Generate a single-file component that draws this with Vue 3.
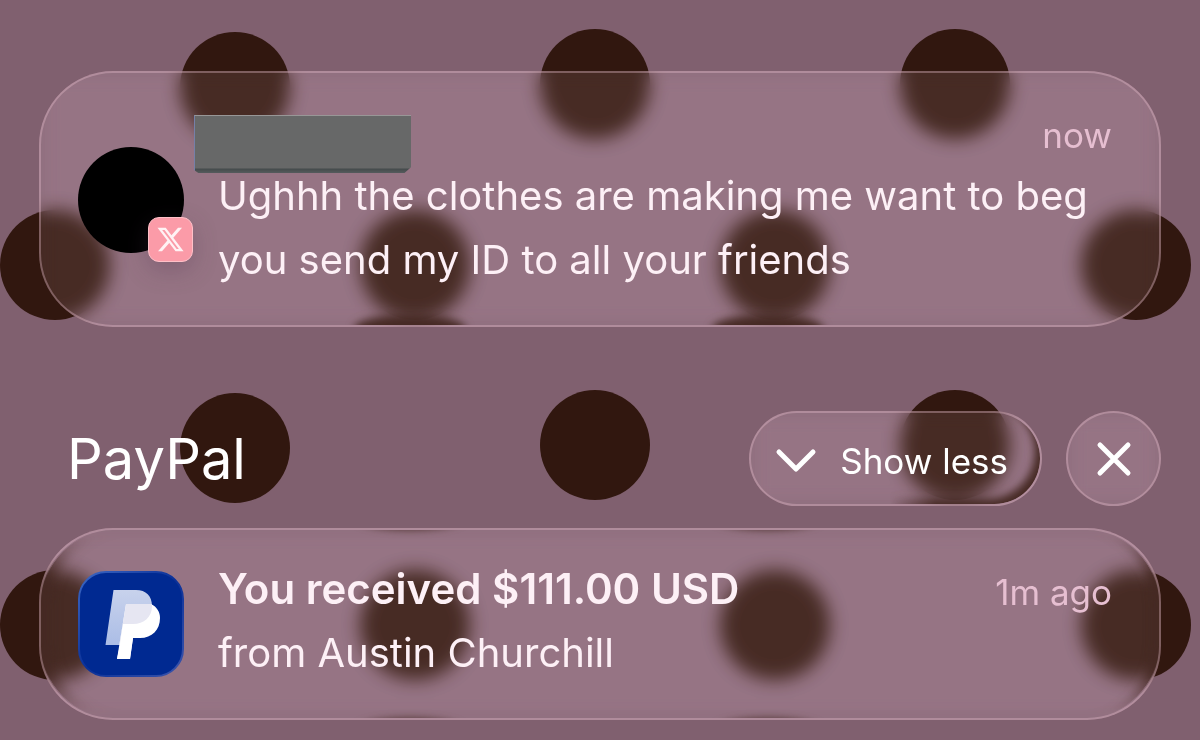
<script setup>
import { ref } from 'vue'

const dots = [
  [235, 87], [595, 84], [955, 84],
  [55, 265], [415, 265], [775, 265], [1136, 265],
  [235, 448], [595, 445], [955, 445],
  [55, 625], [415, 625], [775, 625], [1136, 625],
]
const expanded = ref(true)
const visible = ref(true)
</script>

<template>
  <main class="screen">
    <svg class="wallpaper" viewBox="0 0 1200 740" preserveAspectRatio="xMidYMin slice" aria-hidden="true">
      <circle v-for="([x, y], i) in dots" :key="i" :cx="x" :cy="y" r="55" />
    </svg>

    <article class="card glass">
      <div class="glints" aria-hidden="true">
        <i class="glint low left"></i>
        <i class="glint low right"></i>
      </div>
      <div class="avatar">
        <span class="badge">
          <svg viewBox="0 0 24 24" aria-hidden="true">
            <path d="M18.244 2.25h3.308l-7.227 8.26 8.502 11.24H16.17l-5.214-6.817L4.99 21.75H1.68l7.73-8.835L1.254 2.25H8.08l4.713 6.231zm-1.161 17.52h1.833L7.084 4.126H5.117z" />
          </svg>
        </span>
      </div>
      <div class="content">
        <header class="row">
          <h2 class="title"><span class="redacted"></span></h2>
          <time class="time">now</time>
        </header>
        <p class="body">Ughhh the clothes are making me want to beg you send my ID to all your friends</p>
      </div>
    </article>

    <section v-if="visible" class="group">
      <header class="group-head">
        <h1 class="group-name">PayPal</h1>
        <button class="less glass" type="button" @click="expanded = !expanded">
          <i class="shade" aria-hidden="true"></i>
          <svg class="chevron" viewBox="0 0 40 24" aria-hidden="true"><path d="M3 3 20 20 37 3" /></svg>
          <span class="label">Show less</span>
        </button>
        <button class="close glass" type="button" aria-label="Clear" @click="visible = false">
          <svg viewBox="0 0 32 32" aria-hidden="true"><path d="M2 2 30 30M30 2 2 30" /></svg>
        </button>
      </header>

      <article v-if="expanded" class="card glass">
        <div class="glints" aria-hidden="true">
          <i class="glint high left"></i>
          <i class="glint high right"></i>
          <i class="glint base left"></i>
          <i class="glint base right"></i>
          <i class="rim"></i>
        </div>
        <svg class="app-icon" viewBox="0 0 106 106" role="img" aria-label="PayPal">
          <defs>
            <linearGradient id="edge" x1="0" y1="0" x2="1" y2="1">
              <stop offset="0" stop-color="#3d68c4" />
              <stop offset=".5" stop-color="#0a3098" />
              <stop offset="1" stop-color="#3b55ac" />
            </linearGradient>
            <linearGradient id="back" x1="0" y1="0" x2="0" y2="1">
              <stop offset="0" stop-color="#c8d2ec" />
              <stop offset="1" stop-color="#abbde6" />
            </linearGradient>
            <clipPath id="back-shape">
              <path d="M35.5 19H58C68 19 74 25 74 35C74 46 66 53 55 53H45L42 74H27.5Z" />
            </clipPath>
          </defs>
          <rect x="1" y="1" width="104" height="104" rx="27" fill="#002991" stroke="url(#edge)" stroke-width="2" />
          <path d="M35.5 19H58C68 19 74 25 74 35C74 46 66 53 55 53H45L42 74H27.5Z" fill="url(#back)" />
          <path d="M48 33H73C79 36 82 41 82 47C82 59 74 67 62 67H55L52 88H39Z" fill="#fff" />
          <path d="M48 33H73C79 36 82 41 82 47C82 59 74 67 62 67H55L52 88H39Z" fill="#e6e6f2" clip-path="url(#back-shape)" />
          <path d="M45 53 42 74 39 88H52L55 67H62V53Z" fill="#fff" />
        </svg>
        <div class="content">
          <header class="row">
            <h2 class="title">You received $111.00 USD</h2>
            <time class="time">1m ago</time>
          </header>
          <p class="body">from Austin Churchill</p>
        </div>
      </article>
    </section>
  </main>
</template>

<style>
body {
  margin: 0;
  background: #80606f;
}
</style>

<style scoped>
.screen {
  position: relative;
  box-sizing: border-box;
  min-height: 100vh;
  padding: 71px 39px 20px;
  overflow: hidden;
  background: #80606f;
  font-family: Inter, "Liberation Sans", sans-serif;
  color: #fdf0f6;
}
.wallpaper {
  position: absolute;
  inset: 0;
  width: 100%;
  height: 100%;
  fill: #31170f;
}
.glass {
  position: relative;
  border: 2px solid rgba(234, 196, 210, 0.35);
  background: rgba(255, 235, 240, 0.09);
  backdrop-filter: blur(9px) brightness(1.09);
}
.card {
  display: flex;
  align-items: center;
  gap: 34px;
  padding: 27px 47px 33px 37px;
  border-radius: 74px;
}
.glints {
  position: absolute;
  inset: 0;
  overflow: hidden;
  border-radius: inherit;
}
.glint {
  position: absolute;
  width: 10%;
  height: 28px;
  border-radius: 50%;
  background: #462a24;
  filter: blur(4px);
}
.left { left: 28%; }
.right { left: 60%; }
.low { bottom: -18px; }
.high { top: -29px; }
.base { bottom: -29px; }
.rim {
  position: absolute;
  inset: 0;
  border-radius: inherit;
  box-shadow: inset 12px 0 12px -3px #462a24, inset -9px 0 9px -2px #462a24;
  mask-image: linear-gradient(transparent 2%, #000 30%, #000 70%, transparent 98%);
}
.avatar {
  position: relative;
  flex: none;
  width: 106px;
  height: 106px;
  margin-top: 8px;
  border-radius: 50%;
  background: #000;
}
.badge {
  position: absolute;
  right: -9px;
  bottom: -9px;
  display: flex;
  align-items: center;
  justify-content: center;
  box-sizing: border-box;
  width: 45px;
  height: 45px;
  border: 1px solid #ffc0c8;
  border-radius: 11px;
  background: #fb9ba8;
  box-shadow: 0 8px 24px rgba(80, 50, 80, 0.3);
}
.badge svg {
  width: 29px;
  height: 29px;
  fill: #fff2f4;
}
.app-icon {
  position: relative;
  flex: none;
  width: 106px;
  height: 106px;
  margin-top: 6px;
}
.content {
  position: relative;
  flex: 1;
  min-width: 0;
}
.row {
  display: flex;
  justify-content: space-between;
  align-items: flex-start;
}
.title {
  position: relative;
  margin: 0;
  min-height: 64px;
  font-size: 42px;
  font-weight: 600;
  line-height: 64px;
}
.redacted {
  position: absolute;
  left: -24px;
  top: 15px;
  width: 217px;
  height: 58px;
  background: linear-gradient(#676868 0 52px, #454b4c 53px, #555b5d);
  border-top: 1px solid #989797;
  border-left: 1px solid #7580a8;
  box-sizing: border-box;
  clip-path: polygon(0 0, 100% 0, 100% 90%, 97% 100%, 2% 100%, 0 95%);
}
.time {
  margin-bottom: -6px;
  font-size: 35px;
  line-height: 70px;
  color: #e6bfd1;
}
.body {
  margin: 0;
  font-size: 40px;
  line-height: 64px;
}
.group {
  position: relative;
  margin-top: 84px;
}
.group-head {
  display: flex;
  align-items: center;
  gap: 24px;
  margin-bottom: 22px;
}
.group-name {
  flex: 1;
  margin: 0 0 0 28px;
  font-size: 56px;
  font-weight: 400;
  line-height: 72px;
  color: #fff;
}
.less,
.close {
  display: flex;
  align-items: center;
  box-sizing: border-box;
  height: 95px;
  padding: 0;
  border-radius: 48px;
  font: inherit;
  font-size: 35px;
  color: #fff;
  cursor: pointer;
}
.less {
  gap: 24px;
  padding: 5px 32px 0 25px;
}
.shade {
  position: absolute;
  inset: 0;
  border-radius: inherit;
  box-shadow: inset -7px -7px 9px -2px #462a24;
  mask-image: linear-gradient(90deg, transparent 48%, #000 64%);
}
.chevron {
  position: relative;
  width: 40px;
  height: 24px;
}
.label { position: relative; }
.close {
  justify-content: center;
  width: 95px;
}
.close svg {
  width: 32px;
  height: 32px;
}
.less svg,
.close svg {
  fill: none;
  stroke: #fff;
  stroke-width: 5;
  stroke-linecap: round;
  stroke-linejoin: round;
  overflow: visible;
}
</style>
